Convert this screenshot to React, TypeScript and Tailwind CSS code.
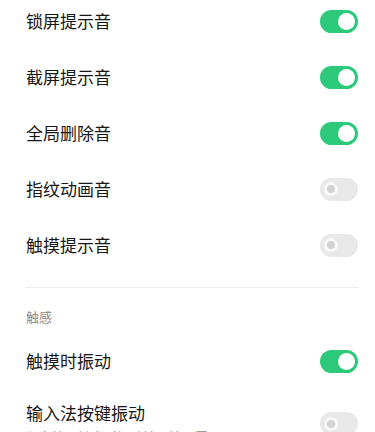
import React from 'react'

interface ToggleProps {
  on: boolean
}

function Toggle({ on }: ToggleProps) {
  if (on) {
    return (
      <div className="flex h-[23px] w-[38px] shrink-0 items-center justify-end rounded-full bg-[#2dc97a] pr-[3px]">
        <div className="h-[17px] w-[17px] rounded-full bg-white" />
      </div>
    )
  }
  return (
    <div className="flex h-[23px] w-[38px] shrink-0 items-center rounded-full bg-[#e8e8e8] pl-[4px]">
      <div className="h-[14px] w-[14px] rounded-full border-[3px] border-[#f8f8f8] bg-[#d4d4d4]" />
    </div>
  )
}

interface RowProps {
  title: string
  on: boolean
}

function Row({ title, on }: RowProps) {
  return (
    <div className="flex h-14 items-center justify-between pl-[26px] pr-[17px]">
      <span className="text-[17px] leading-6 text-[#161616]">{title}</span>
      <Toggle on={on} />
    </div>
  )
}

const soundRows = [
  { title: '锁屏提示音', on: true },
  { title: '截屏提示音', on: true },
  { title: '全局删除音', on: true },
  { title: '指纹动画音', on: false },
  { title: '触摸提示音', on: false },
]

export default function App() {
  return (
    <div
      className="h-[432px] w-[375px] overflow-hidden bg-white"
      style={{ fontFamily: '"Noto Sans CJK SC", "Noto Sans", sans-serif' }}
    >
      <div className="-mt-[7px]">
        {soundRows.map((r) => (
          <Row key={r.title} title={r.title} on={r.on} />
        ))}
      </div>

      <div className="ml-[26px] mr-[17px] mt-[14px] h-px bg-[#ededed]" />

      <div className="pl-[26px] pt-[20px] pb-[7px] text-[13px] leading-[18px] text-[#8a8a8a]">触感</div>

      <Row title="触摸时振动" on={true} />

      <div className="flex items-center justify-between py-[12px] pl-[26px] pr-[17px]">
        <div className="flex flex-col">
          <span className="text-[17px] leading-6 text-[#161616]">输入法按键振动</span>
          <span className="mt-[3px] text-[13px] leading-[18px] text-[#8a8a8a]">仅在按下键盘时振动输入法设置</span>
        </div>
        <Toggle on={false} />
      </div>
    </div>
  )
}
